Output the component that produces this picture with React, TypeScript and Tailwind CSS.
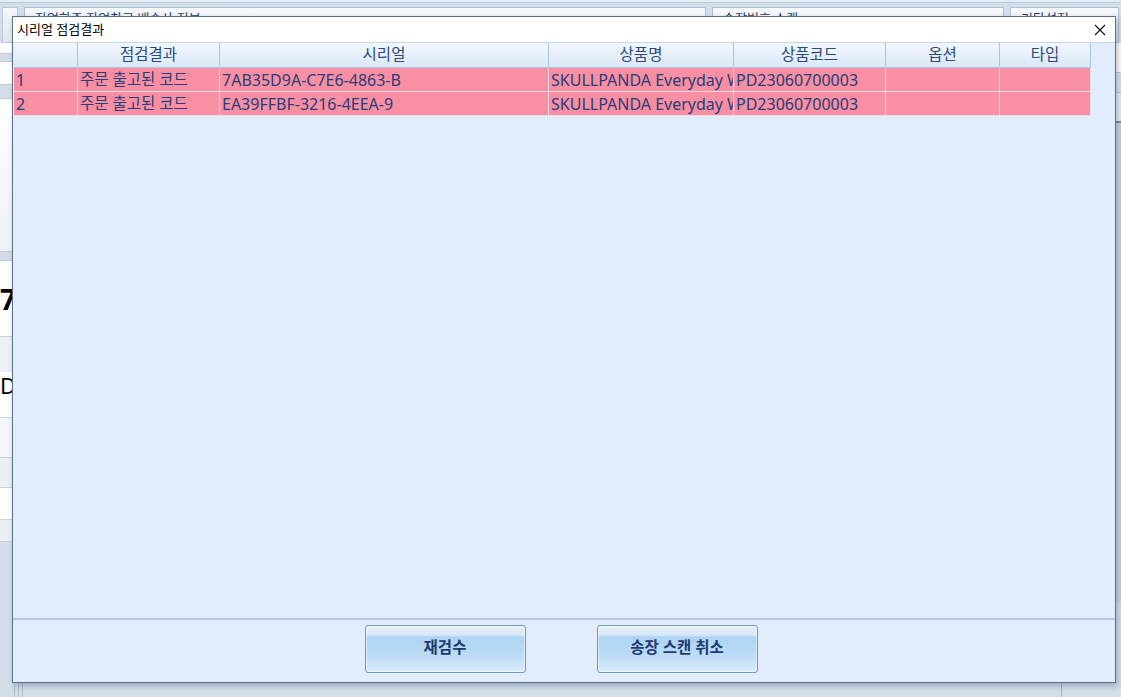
import React from "react";

const cols = [
  { w: 64, label: "" },
  { w: 142, label: "점검결과" },
  { w: 329, label: "시리얼" },
  { w: 185, label: "상품명" },
  { w: 152, label: "상품코드" },
  { w: 114, label: "옵션" },
  { w: 91, label: "타입" },
];

const rows = [
  ["1", "주문 출고된 코드", "7AB35D9A-C7E6-4863-B", "SKULLPANDA Everyday Wonderland", "PD23060700003", "", ""],
  ["2", "주문 출고된 코드", "EA39FFBF-3216-4EEA-9", "SKULLPANDA Everyday Wonderland", "PD23060700003", "", ""],
];

function Background() {
  return (
    <div className="absolute inset-0 flex flex-col bg-[#d3deea]">
      <div className="h-[3px] bg-[#e4ebf3] border-b border-[#b9c9dc]" />
      <div className="flex h-[40px] gap-[6px] px-[2px] pt-[4px]">
        <div className="w-[16px] bg-gradient-to-b from-[#f4f7fb] to-[#dfe7f0] border border-[#b8c6d8]" />
        <div className="w-[682px] border border-[#aebfd3] bg-gradient-to-b from-[#f6f9fc] to-[#e0e8f1] px-[10px] text-[13px] text-[#2a3d66] leading-[20px]">
          작업화주 작업창고 배송사 정보
        </div>
        <div className="w-[292px] border border-[#aebfd3] bg-gradient-to-b from-[#f6f9fc] to-[#e0e8f1] px-[10px] text-[13px] text-[#2a3d66] leading-[20px]">
          송장번호 스캔
        </div>
        <div className="flex-1 border border-[#aebfd3] bg-gradient-to-b from-[#f6f9fc] to-[#e0e8f1] px-[10px] text-[13px] text-[#2a3d66] leading-[20px]">
          기타설정
        </div>
      </div>
      <div className="flex flex-1">
        <div className="w-[300px] flex flex-col">
          <div className="h-[10px] bg-white" />
          <div className="h-[9px] bg-[#d3dde9] border-y border-[#c0ccda]" />
          <div className="h-[22px] bg-white" />
          <div className="h-[15px] bg-[#d3dde9] border-y border-[#c0ccda]" />
          <div className="h-[152px] bg-gradient-to-b from-white to-[#eef1f5]" />
          <div className="h-[10px] bg-[#d3dde9] border-y border-[#c0ccda]" />
          <div className="h-[75px] bg-white flex items-center text-[28px] font-bold text-black leading-none">
            70
          </div>
          <div className="h-[36px] bg-[#eef1f5] border-t border-[#c8d1dc]" />
          <div className="h-[26px] bg-white text-[22px] leading-[26px] text-black">DA</div>
          <div className="h-[20px] bg-white border-b border-[#c8d1dc]" />
          <div className="h-[40px] bg-[#f4f6f9] border-b border-[#c8d1dc]" />
          <div className="h-[30px] bg-[#eceff3] border-b border-[#c8d1dc]" />
          <div className="h-[32px] bg-white border-b border-[#c8d1dc]" />
          <div className="h-[22px] bg-[#eceff3] border-b border-[#c8d1dc]" />
          <div className="flex-1 bg-[#d3deea] flex gap-[3px] pl-[14px]">
            <div className="w-px bg-[#aab8c8]" />
            <div className="w-px bg-[#aab8c8]" />
            <div className="w-px bg-[#aab8c8]" />
          </div>
        </div>
        <div className="flex-1" />
        <div className="w-[60px] flex flex-col border-l border-[#9fb0c4] bg-[#eef2f6]">
          <div className="h-[30px] bg-white border-b border-[#b9c6d6]" />
          <div className="h-[20px] bg-[#dde5ee] border-b border-[#b9c6d6]" />
          <div className="h-[30px] bg-[#e8eef4] border-b-2 border-[#7d8ea3]" />
          <div className="h-[480px] bg-[#c7d2df]" />
          <div className="flex-1 bg-[#d3deea]" />
        </div>
      </div>
    </div>
  );
}

function Cell({ w, children, head, latin }: { w: number; children?: React.ReactNode; head?: boolean; latin?: boolean }) {
  if (head) {
    return (
      <div
        style={{ width: w }}
        className="shrink-0 h-[25px] border-r border-b border-[#a9c3e2] bg-gradient-to-b from-[#f2f7fd] to-[#dbe8f7] flex items-center justify-center text-[15.5px] text-[#2b4a7c]"
      >
        {children}
      </div>
    );
  }
  return (
    <div
      style={{ width: w }}
      className={
        "shrink-0 h-[24px] border-r border-b border-[#ecd6e2] bg-[#f88fa3] flex items-center px-[2px] text-[#283d7a] whitespace-nowrap overflow-hidden " +
        (latin ? "text-[16px]" : "text-[15.5px]")
      }
    >
      {children}
    </div>
  );
}

function Button({ children }: { children: React.ReactNode }) {
  return (
    <button className="w-[161px] h-[48px] rounded-[3px] border border-[#6e98c6] bg-[linear-gradient(to_bottom,#e8f2fb_0%,#d5e7f6_20%,#acd4f3_24%,#bddcf6_65%,#d9ecfb_100%)] shadow-[inset_0_0_0_1px_rgba(255,255,255,0.5)] text-[15.5px] font-bold text-[#1f3b70] flex items-center justify-center pb-[2px]">
      {children}
    </button>
  );
}

export default function App() {
  return (
    <div
      className="relative w-[1121px] h-[697px] overflow-hidden"
      style={{ fontFamily: "'Noto Sans', 'Noto Sans CJK KR', sans-serif" }}
    >
      <Background />
      <div className="absolute left-[12px] top-[16px] w-[1104px] h-[667px] border border-[#5d6f86] bg-[#e1edfd] flex flex-col shadow-[2px_3px_6px_rgba(60,80,110,0.35)]">
        <div className="h-[26px] shrink-0 bg-white flex items-center justify-between pl-[4px] pr-[8px] border-b border-[#c9d6e6]">
          <span className="text-[13px] text-black leading-none">시리얼 점검결과</span>
          <svg width="12" height="12" viewBox="0 0 12 12" className="mr-[1px]">
            <path d="M1 1 L11 11 M11 1 L1 11" stroke="#111" strokeWidth="1.1" />
          </svg>
        </div>
        <div className="flex-1 pl-[1px]">
          <div className="flex">
            {cols.map((c, i) => (
              <Cell key={i} w={c.w} head>
                {c.label}
              </Cell>
            ))}
          </div>
          {rows.map((r, ri) => (
            <div key={ri} className="flex">
              {r.map((v, ci) => (
                <Cell key={ci} w={cols[ci].w} latin={ci !== 1}>
                  {v}
                </Cell>
              ))}
            </div>
          ))}
        </div>
        <div className="h-[64px] shrink-0 border-t-2 border-[#b8cadf] flex items-center justify-center gap-[71px] pb-[4px] pr-[6px]">
          <Button>재검수</Button>
          <Button>송장 스캔 취소</Button>
        </div>
      </div>
    </div>
  );
}
